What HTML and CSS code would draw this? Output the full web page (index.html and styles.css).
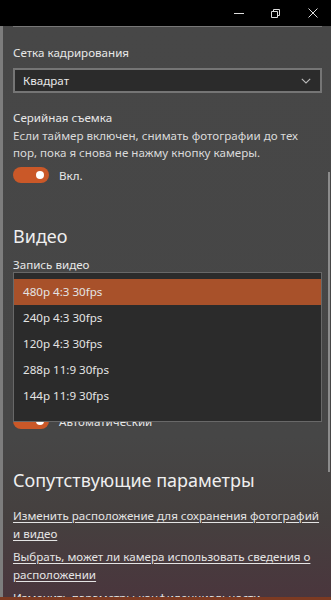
FILE: index.html
```html
<!DOCTYPE html>
<html lang="ru">
<head>
<meta charset="utf-8">
<link rel="stylesheet" href="styles.css">
</head>
<body>
<div class="window">
  <div class="titlebar">
    <span class="tb-btn"><svg width="12" height="12" viewBox="0 0 12 12"><path d="M1 6.5h10" stroke="#ddd" stroke-width="1"/></svg></span>
    <span class="tb-btn"><svg width="12" height="12" viewBox="0 0 12 12"><path d="M1.5 4.5h6v6h-6z M3.5 4.5v-2h6v6h-2" fill="none" stroke="#ddd" stroke-width="1"/></svg></span>
    <span class="tb-btn"><svg width="12" height="12" viewBox="0 0 12 12"><path d="M1.5 1.5l9 9M10.5 1.5l-9 9" stroke="#ddd" stroke-width="1"/></svg></span>
  </div>
  <div class="body">
    <div class="edge"></div>
    <div class="content">
      <div class="topline"></div>
      <div class="label first">Сетка кадрирования</div>
      <div class="combo">
        <span>Квадрат</span>
        <svg width="10" height="6" viewBox="0 0 10 6"><path d="M0.8 0.8l4.2 4.2 4.2-4.2" fill="none" stroke="#bbb" stroke-width="1.1"/></svg>
      </div>
      <div class="label burst">Серийная съемка</div>
      <div class="desc">Если таймер включен, снимать фотографии до тех пор, пока я снова не нажму кнопку камеры.</div>
      <div class="toggle-row">
        <span class="toggle"><span class="knob"></span></span>
        <span class="toggle-text">Вкл.</span>
      </div>
      <h2 class="heading video">Видео</h2>
      <div class="label rec">Запись видео</div>
      <div class="popup-wrap">
        <div class="toggle-row under">
          <span class="toggle"><span class="knob"></span></span>
          <span class="toggle-text">Автоматический</span>
        </div>
        <div class="popup">
          <div class="item selected">480p 4:3 30fps</div>
          <div class="item">240p 4:3 30fps</div>
          <div class="item">120p 4:3 30fps</div>
          <div class="item">288p 11:9 30fps</div>
          <div class="item">144p 11:9 30fps</div>
        </div>
      </div>
      <h2 class="heading related">Сопутствующие параметры</h2>
      <a class="link first-link">Изменить расположение для сохранения фотографий и видео</a>
      <a class="link">Выбрать, может ли камера использовать сведения о расположении</a>
      <a class="link">Изменить параметры конфиденциальности</a>
    </div>
    <div class="scroll"><div class="thumb"></div></div>
  </div>
  <div class="taskbar"></div>
</div>
</body>
</html>
```
FILE: styles.css
```css
html, body {
  margin: 0;
  padding: 0;
  width: 331px;
  height: 600px;
  overflow: hidden;
  background: #464646;
}
.window {
  width: 331px;
  height: 600px;
  display: flex;
  flex-direction: column;
  font-family: "Noto Sans", Roboto, sans-serif;
  color: #e8e8e8;
  overflow: hidden;
}
.titlebar {
  height: 26px;
  flex: none;
  background: #000;
  display: flex;
  justify-content: flex-end;
  align-items: center;
}
.tb-btn {
  width: 37px;
  height: 26px;
  display: flex;
  align-items: center;
  justify-content: center;
}
.body {
  flex: 1;
  display: flex;
  min-height: 0;
  background: linear-gradient(180deg, #474747 0%, #464646 72%, #45403f 86%, #4a363d 100%);
}
.edge {
  width: 3px;
  flex: none;
  background: #7d7d7d;
}
.content {
  flex: 1;
  padding: 0 0 0 10px;
  min-width: 0;
  overflow: hidden;
}
.topline {
  height: 1px;
  background: #777;
}
.label {
  font-size: 11.6px;
  line-height: 18px;
}
.label.first { margin-top: 17px; }
.combo {
  margin-top: 6px;
  height: 21px;
  border: 2px solid #757575;
  background: #2b2b2b;
  display: flex;
  align-items: center;
  justify-content: space-between;
  padding: 0 9px 0 8px;
  font-size: 11.6px;
}
.label.burst { margin-top: 16px; }
.desc {
  font-size: 11.6px;
  line-height: 17px;
  color: #dadada;
}
.toggle-row {
  display: flex;
  align-items: center;
  gap: 10px;
  margin-top: 5px;
  height: 18px;
}
.toggle {
  width: 36px;
  height: 16px;
  border-radius: 8px;
  background: #ca5828;
  position: relative;
  flex: none;
}
.knob {
  position: absolute;
  width: 8px;
  height: 8px;
  border-radius: 50%;
  background: #fff;
  right: 5px;
  top: 4px;
}
.toggle-text { font-size: 11.6px; }
.heading {
  margin: 0;
  font-weight: normal;
  font-size: 18px;
  line-height: 24px;
  color: #efefef;
}
.heading.video { margin-top: 40px; }
.label.rec { margin-top: 8px; }
.popup-wrap {
  position: relative;
  height: 154px;
  margin-top: -2px;
}
.toggle-row.under {
  position: absolute;
  left: 0;
  top: 140px;
  margin: 0;
}
.popup {
  position: absolute;
  left: 0;
  right: 0;
  top: 0;
  height: 136px;
  background: #2b2b2b;
  border: 1px solid #686868;
  padding: 6px 0;
}
.item {
  height: 26px;
  line-height: 26px;
  padding-left: 9px;
  font-size: 11.6px;
  color: #e4e4e4;
}
.item.selected { background: #a8512a; }
.heading.related { margin-top: 42px; }
.link {
  display: block;
  font-size: 11.6px;
  line-height: 18px;
  color: #e4e4e4;
  text-decoration: underline;
  text-underline-offset: 2px;
  margin-top: 5px;
}
.link.first-link { margin-top: 15px; }
.scroll {
  width: 9px;
  flex: none;
  position: relative;
}
.thumb {
  position: absolute;
  right: 1px;
  top: 146px;
  width: 2px;
  height: 300px;
  background: #8c8c8c;
}
.taskbar {
  height: 3px;
  flex: none;
  background: #7c3a22;
}
```
